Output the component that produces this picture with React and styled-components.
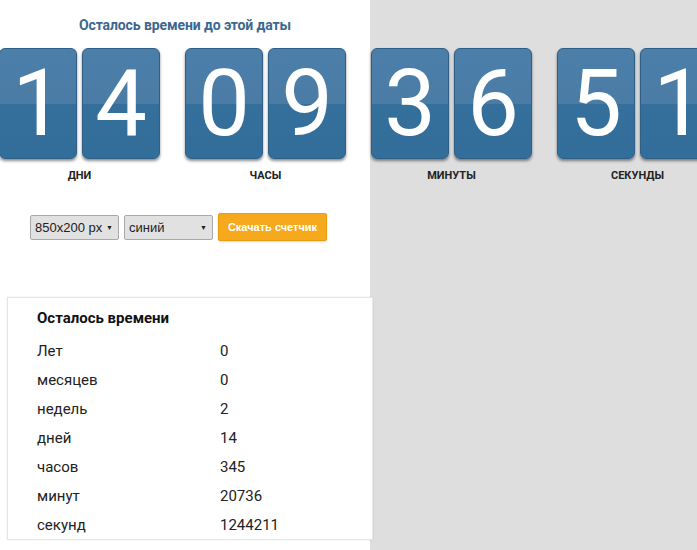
import React from 'react';
import styled, {createGlobalStyle} from 'styled-components';

const GlobalStyle = createGlobalStyle`
  html, body {
    margin: 0;
    padding: 0;
    background: #dedede;
  }
  body {
    font-family: Roboto, "Liberation Sans", Arial, sans-serif;
    overflow: hidden;
  }
`;

const groups = [
  {digits: '14', label: 'ДНИ'},
  {digits: '09', label: 'ЧАСЫ'},
  {digits: '36', label: 'МИНУТЫ'},
  {digits: '51', label: 'СЕКУНДЫ'},
];

const rows = [
  ['Лет', '0'],
  ['месяцев', '0'],
  ['недель', '2'],
  ['дней', '14'],
  ['часов', '345'],
  ['минут', '20736'],
  ['секунд', '1244211'],
];

const App = () => {
  return (
    <>
      <GlobalStyle/>
      <Page>
        <Title>Осталось времени до этой даты</Title>
        <Counter>
          {groups.map((g) => (
            <Group key={g.label}>
              <Pair>
                {g.digits.split('').map((d, i) => (
                  <Card key={i}>{d}</Card>
                ))}
              </Pair>
              <Label>{g.label}</Label>
            </Group>
          ))}
        </Counter>
        <Controls>
          <FakeSelect $width={89}>
            <span>850x200 px</span>
            <Arrow>▼</Arrow>
          </FakeSelect>
          <FakeSelect $width={89}>
            <span>синий</span>
            <Arrow>▼</Arrow>
          </FakeSelect>
          <Button>Скачать счетчик</Button>
        </Controls>
        <Table>
          <TableTitle>Осталось времени</TableTitle>
          {rows.map(([name, value]) => (
            <Row key={name}>
              <Cell>{name}</Cell>
              <Cell>{value}</Cell>
            </Row>
          ))}
        </Table>
      </Page>
    </>
  );
};

const Page = styled.div`
    width: 370px;
    min-height: 550px;
    background: #fff;
    padding-top: 16px;
    box-sizing: border-box;
`;

const Title = styled.h1`
    margin: 0;
    text-align: center;
    font-size: 14px;
    line-height: 18px;
    font-weight: 700;
    letter-spacing: -0.1px;
    color: #3c6790;
`;

const Counter = styled.div`
    display: flex;
    gap: 25px;
    margin-top: 14px;
    margin-left: -1px;
    width: 850px;
`;

const Group = styled.div`
    display: flex;
    flex-direction: column;
    align-items: center;
`;

const Pair = styled.div`
    display: flex;
    gap: 5px;
`;

const Card = styled.div`
    width: 76px;
    height: 109px;
    border: 1px solid #2f5f87;
    border-radius: 6px;
    background: linear-gradient(to bottom, #4b7ea8 0, #4a7ca6 50%, #35709d 50%, #336d9a 100%);
    box-shadow: 0 2px 3px rgba(0, 0, 0, 0.45);
    color: #fff;
    font-family: Roboto, sans-serif;
    font-size: 92px;
    line-height: 110px;
    text-align: center;
`;

const Label = styled.div`
    margin-top: 10px;
    font-size: 11px;
    line-height: 14px;
    font-weight: 700;
    color: #222;
`;

const Controls = styled.div`
    display: flex;
    align-items: center;
    gap: 5px;
    margin-top: 30px;
    margin-left: 30px;
`;

const FakeSelect = styled.div`
    display: flex;
    align-items: center;
    justify-content: space-between;
    width: ${(p) => p.$width}px;
    height: 25px;
    box-sizing: border-box;
    padding: 0 5px 0 4px;
    background: #e1e1e1;
    border: 1px solid #a9a9a9;
    border-radius: 2px;
    font-family: "Liberation Sans", Arial, sans-serif;
    font-size: 13px;
    color: #222;
`;

const Arrow = styled.span`
    font-size: 7px;
    color: #222;
`;

const Button = styled.div`
    width: 109px;
    height: 28px;
    box-sizing: border-box;
    display: flex;
    align-items: center;
    justify-content: center;
    background: #f6a91c;
    border: 1px solid #e99e12;
    border-radius: 2px;
    box-shadow: 0 1px 2px rgba(0, 0, 0, 0.15);
    color: #fff;
    font-family: "Liberation Sans", Arial, sans-serif;
    font-size: 11px;
    font-weight: 700;
`;

const Table = styled.div`
    margin: 56px 0 0 7px;
    width: 366px;
    box-sizing: border-box;
    padding: 10px 0 0 29px;
    background: #fff;
    border: 1px solid #e6e6e6;
    box-shadow: 0 0 2px rgba(0, 0, 0, 0.08);
    position: relative;
`;

const TableTitle = styled.div`
    font-size: 15px;
    font-weight: 700;
    line-height: 20px;
    color: #111;
    margin-bottom: 8px;
`;

const Row = styled.div`
    display: grid;
    grid-template-columns: 183px 1fr;
    height: 29px;
    align-items: center;
`;

const Cell = styled.div`
    font-size: 15px;
    color: #222;
`;

export default App;
